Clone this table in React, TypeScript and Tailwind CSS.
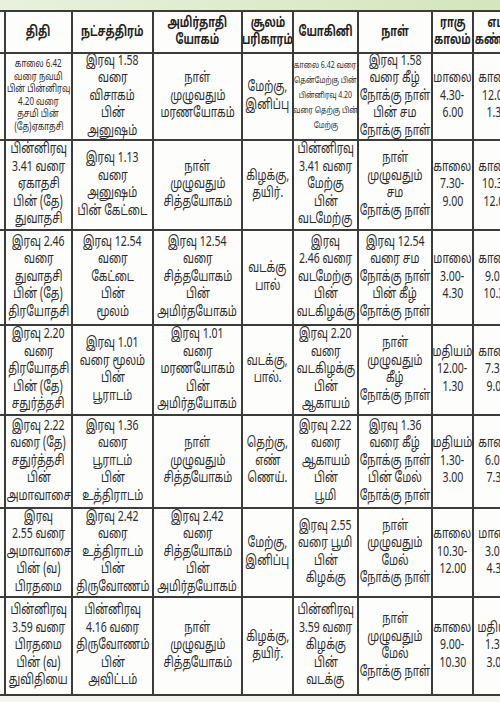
import React from "react";

type Cell = { lines: string[]; size?: "sm" | "xs" };

const header: string[][] = [
  ["திதி"],
  ["நட்சத்திரம்"],
  ["அமிர்தாதி", "யோகம்"],
  ["சூலம்", "பரிகாரம்"],
  ["யோகினி"],
  ["நாள்"],
  ["ராகு", "காலம்"],
  ["எம", "கண்டம்"],
];

const rows: Cell[][] = [
  [
    { lines: ["காலை 6.42", "வரை நவமி", "பின் பின்னிரவு", "4.20 வரை", "தசமி பின்", "(தே)ஏகாதசி"], size: "sm" },
    { lines: ["இரவு 1.58", "வரை", "விசாகம்", "பின்", "அனுஷம்"] },
    { lines: ["நாள்", "முழுவதும்", "மரணயோகம்"] },
    { lines: ["மேற்கு,", "இனிப்பு"] },
    { lines: ["காலை 6.42 வரை", "தென்மேற்கு பின்", "பின்னிரவு 4.20", "வரை தெற்கு பின்", "மேற்கு"], size: "xs" },
    { lines: ["இரவு 1.58", "வரை கீழ்", "நோக்கு நாள்", "பின் சம", "நோக்கு நாள்"] },
    { lines: ["மாலை", "4.30-", "6.00"] },
    { lines: ["காலை", "12.00-", "1.30"] },
  ],
  [
    { lines: ["பின்னிரவு", "3.41 வரை", "ஏகாதசி", "பின் (தே)", "துவாதசி"] },
    { lines: ["இரவு 1.13", "வரை", "அனுஷம்", "பின் கேட்டை"] },
    { lines: ["நாள்", "முழுவதும்", "சித்தயோகம்"] },
    { lines: ["கிழக்கு,", "தயிர்."] },
    { lines: ["பின்னிரவு", "3.41 வரை", "மேற்கு", "பின்", "வடமேற்கு"] },
    { lines: ["நாள்", "முழுவதும்", "சம", "நோக்கு நாள்"] },
    { lines: ["காலை", "7.30-", "9.00"] },
    { lines: ["காலை", "10.30-", "12.00"] },
  ],
  [
    { lines: ["இரவு 2.46", "வரை", "துவாதசி", "பின் (தே)", "திரயோதசி"] },
    { lines: ["இரவு 12.54", "வரை", "கேட்டை", "பின்", "மூலம்"] },
    { lines: ["இரவு 12.54", "வரை", "சித்தயோகம்", "பின்", "அமிர்தயோகம்"] },
    { lines: ["வடக்கு", "பால்"] },
    { lines: ["இரவு", "2.46 வரை", "வடமேற்கு", "பின்", "வடகிழக்கு"] },
    { lines: ["இரவு 12.54", "வரை சம", "நோக்கு நாள்", "பின் கீழ்", "நோக்கு நாள்"] },
    { lines: ["மாலை", "3.00-", "4.30"] },
    { lines: ["காலை", "9.00-", "10.30"] },
  ],
  [
    { lines: ["இரவு 2.20", "வரை", "திரயோதசி", "பின் (தே)", "சதுர்த்தசி"] },
    { lines: ["இரவு 1.01", "வரை மூலம்", "பின்", "பூராடம்"] },
    { lines: ["இரவு 1.01", "வரை", "மரணயோகம்", "பின்", "அமிர்தயோகம்"] },
    { lines: ["வடக்கு,", "பால்."] },
    { lines: ["இரவு 2.20", "வரை", "வடகிழக்கு", "பின்", "ஆகாயம்"] },
    { lines: ["நாள்", "முழுவதும்", "கீழ்", "நோக்கு நாள்"] },
    { lines: ["மதியம்", "12.00-", "1.30"] },
    { lines: ["காலை", "7.30-", "9.00"] },
  ],
  [
    { lines: ["இரவு 2.22", "வரை (தே)", "சதுர்த்தசி", "பின்", "அமாவாசை"] },
    { lines: ["இரவு 1.36", "வரை", "பூராடம்", "பின்", "உத்திராடம்"] },
    { lines: ["நாள்", "முழுவதும்", "சித்தயோகம்"] },
    { lines: ["தெற்கு,", "எண்", "ணெய்."] },
    { lines: ["இரவு 2.22", "வரை", "ஆகாயம்", "பின்", "பூமி"] },
    { lines: ["இரவு 1.36", "வரை கீழ்", "நோக்கு நாள்", "பின் மேல்", "நோக்கு நாள்"] },
    { lines: ["மதியம்", "1.30-", "3.00"] },
    { lines: ["காலை", "6.00-", "7.30"] },
  ],
  [
    { lines: ["இரவு", "2.55 வரை", "அமாவாசை", "பின் (வ)", "பிரதமை"] },
    { lines: ["இரவு 2.42", "வரை", "உத்திராடம்", "பின்", "திருவோணம்"] },
    { lines: ["இரவு 2.42", "வரை", "சித்தயோகம்", "பின்", "அமிர்தயோகம்"] },
    { lines: ["மேற்கு,", "இனிப்பு"] },
    { lines: ["இரவு 2.55", "வரை பூமி", "பின்", "கிழக்கு"] },
    { lines: ["நாள்", "முழுவதும்", "மேல்", "நோக்கு நாள்"] },
    { lines: ["காலை", "10.30-", "12.00"] },
    { lines: ["மாலை", "3.00-", "4.30"] },
  ],
  [
    { lines: ["பின்னிரவு", "3.59 வரை", "பிரதமை", "பின் (வ)", "துவிதியை"] },
    { lines: ["பின்னிரவு", "4.16 வரை", "திருவோணம்", "பின்", "அவிட்டம்"] },
    { lines: ["நாள்", "முழுவதும்", "சித்தயோகம்"] },
    { lines: ["கிழக்கு,", "தயிர்."] },
    { lines: ["பின்னிரவு", "3.59 வரை", "கிழக்கு", "பின்", "வடக்கு"] },
    { lines: ["நாள்", "முழுவதும்", "மேல்", "நோக்கு நாள்"] },
    { lines: ["காலை", "9.00-", "10.30"] },
    { lines: ["மதியம்", "1.30-", "3.00"] },
  ],
];

function BodyCell({ cell }: { cell: Cell }) {
  const sizeCls =
    cell.size === "sm"
      ? "text-[10px] leading-[12.5px] scale-x-[0.8]"
      : cell.size === "xs"
      ? "text-[8.5px] leading-[15px] scale-x-[0.82]"
      : "text-[14px] leading-[17.5px] scale-x-[0.75]";
  return (
    <div className="flex flex-col items-center justify-center overflow-hidden bg-[#fdfdfb] text-center text-[#2b2b2b]">
      {cell.lines.map((l, i) => (
        <div key={i} className={`whitespace-nowrap ${sizeCls}`}>
          {l}
        </div>
      ))}
    </div>
  );
}

export default function App() {
  return (
    <div className="w-[500px] h-[702px] overflow-hidden bg-[#f4f5f1] font-['Noto_Sans_Tamil','Noto_Sans',sans-serif]">
      <div className="h-[10px] bg-gradient-to-r from-[#e9f1dc] to-[#d3e6bc]" />
      <div className="w-[520px] bg-[#3b3b3b] py-[2px] grid grid-cols-[4px_65px_79px_87px_49px_63px_72px_39px_46px] grid-rows-[40px_85px_88px_93px_88px_91px_87px_96px] gap-[2px]">
        <div className="bg-[#fdfdfb]" />
        {header.map((h, i) => (
          <div
            key={`h${i}`}
            className="flex flex-col items-center justify-center overflow-hidden bg-[#fdfdfb] text-center font-bold text-[#222] text-[14px] leading-[17px]"
          >
            {h.map((l, j) => (
              <div key={j} className="whitespace-nowrap scale-x-[0.72]">
                {l}
              </div>
            ))}
          </div>
        ))}
        {rows.map((r, ri) => (
          <React.Fragment key={ri}>
            <div className="bg-[#fdfdfb]" />
            {r.map((c, ci) => (
              <BodyCell key={ci} cell={c} />
            ))}
          </React.Fragment>
        ))}
      </div>
    </div>
  );
}
